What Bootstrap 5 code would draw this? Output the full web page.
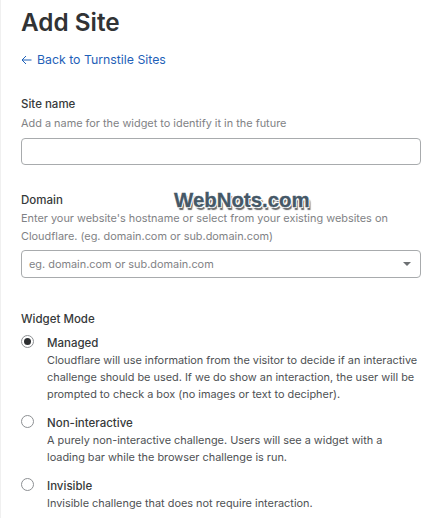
<!doctype html>
<html lang="en"><head><meta charset="utf-8"><title>Add Site</title>
<link href="https://cdn.jsdelivr.net/npm/bootstrap@5.3.0/dist/css/bootstrap.min.css" rel="stylesheet">
<style>
html,body{height:518px;overflow:hidden}
body{font-family:Inter,"Liberation Sans",sans-serif;color:#36393a;background:#fff;font-size:11px;line-height:18px}
.page-wrap{padding:7px 10px 0 20px;border-left:1px solid #f0f0f0;position:relative;height:518px}
.page-title{font-size:24.3px;font-weight:600;line-height:30px;margin:0 0 13px;color:#313335}
.back-link{display:flex;align-items:center;gap:5px;color:#1f61b8;text-decoration:none;font-size:12.3px;line-height:20px;margin-bottom:25px}
.field-label{font-weight:500;font-size:11.5px;line-height:18px;color:#36393a;margin:0 0 1px}
.field-label.tight{margin-bottom:0}
.field-hint{color:#7f8285;font-size:10.9px;line-height:18px;margin:0 0 6px}
.domain-block .field-hint{margin-bottom:5px}
.field-box{height:27px;border:1px solid #a8abad;border-radius:4px;width:400px;display:block;padding:0 7px}
.field-box:focus{box-shadow:none;border-color:#a8abad}
.select-box{display:flex;align-items:center;justify-content:space-between;color:#7f8285;font-size:10.9px;height:28px}
.caret{width:0;height:0;border-left:4px solid transparent;border-right:4px solid transparent;border-top:4px solid #6d7073;margin-right:2px}
.site-block{margin-bottom:26px}
.domain-block{margin-bottom:32px}
.field-label.mode-heading{margin-bottom:6px}
.mode-row{display:flex;gap:13px;margin:0 0 11px}
.radio-dot{width:13px;height:13px;border-radius:50%;border:1px solid #8d9093;flex:none;margin-top:1px;display:flex;align-items:center;justify-content:center;background:#fff}
.radio-dot.on::after{content:"";width:7px;height:7px;border-radius:50%;background:#2c2e30}
.mode-title{font-weight:500;font-size:11.5px;line-height:18px;color:#36393a}
.mode-desc{color:#4e5154;font-size:10.9px;line-height:17px}
.watermark{position:absolute;left:173px;top:187px;font-family:"Liberation Sans",Arial,sans-serif;font-weight:700;font-size:20.4px;line-height:26px;color:#455867;-webkit-text-stroke:.3px #455867;text-shadow:1px 1px 0 #fff,-1px -1px 0 #fff,1px -1px 0 #fff,-1px 1px 0 #fff,2px 3px 1px #666}
</style></head><body>
<div class="page-wrap">
<h1 class="page-title">Add Site</h1>
<a class="back-link" href="#"><svg width="11" height="10" viewBox="0 0 11 10" fill="none" stroke="#1f61b8" stroke-width="1"><path d="M10.5 5H1M5 1 1 5l4 4"/></svg>Back to Turnstile Sites</a>
<div class="site-block">
<p class="field-label">Site name</p>
<p class="field-hint">Add a name for the widget to identify it in the future</p>
<input class="field-box form-control" type="text" aria-label="Site name">
</div>
<div class="domain-block">
<p class="field-label tight">Domain</p>
<p class="field-hint">Enter your website's hostname or select from your existing websites on Cloudflare. (eg. domain.com or sub.domain.com)</p>
<div class="field-box select-box"><span>eg. domain.com or sub.domain.com</span><span class="caret"></span></div>
</div>
<p class="field-label mode-heading">Widget Mode</p>
<div class="mode-row"><span class="radio-dot on"></span><div><div class="mode-title">Managed</div><div class="mode-desc">Cloudflare will use information from the visitor to decide if an interactive challenge should be used. If we do show an interaction, the user will be prompted to check a box (no images or text to decipher).</div></div></div>
<div class="mode-row"><span class="radio-dot"></span><div><div class="mode-title">Non-interactive</div><div class="mode-desc">A purely non-interactive challenge. Users will see a widget with a loading bar while the browser challenge is run.</div></div></div>
<div class="mode-row"><span class="radio-dot"></span><div><div class="mode-title">Invisible</div><div class="mode-desc">Invisible challenge that does not require interaction.</div></div></div>
<div class="watermark">WebNots.com</div>
</div>
<script src="https://cdn.jsdelivr.net/npm/bootstrap@5.3.0/dist/js/bootstrap.bundle.min.js"></script>
</body></html>
